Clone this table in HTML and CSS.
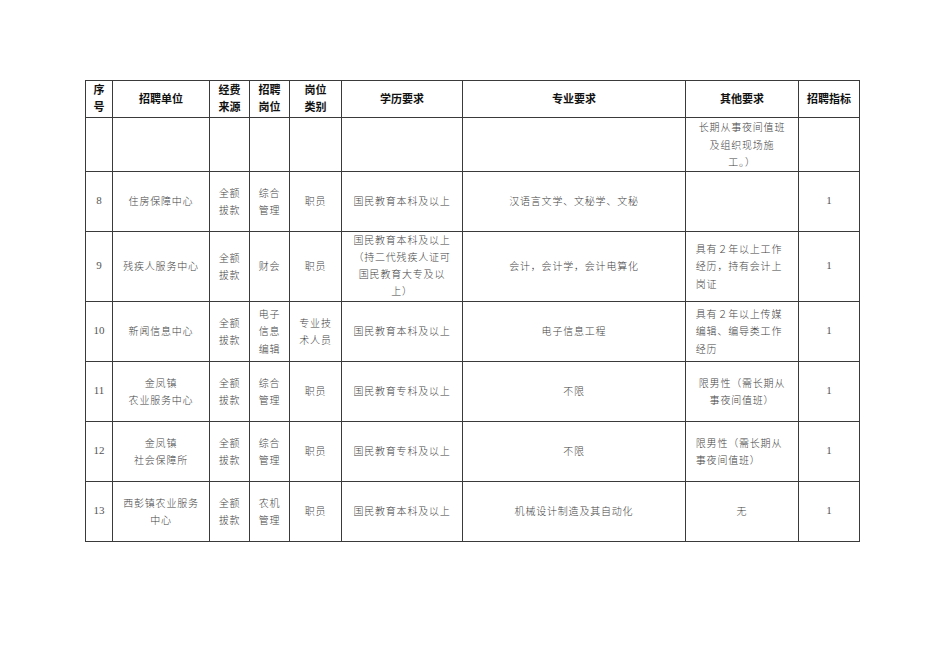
FILE: index.html
```html
<!DOCTYPE html>
<html lang="zh-CN">
<head>
<meta charset="utf-8">
<title>招聘计划表</title>
<link rel="stylesheet" href="styles.css">
</head>
<body>
<div class="page">
<table class="grid">
<colgroup>
<col class="w-no"><col class="w-unit"><col class="w-fund"><col class="w-post"><col class="w-type"><col class="w-edu"><col class="w-major"><col class="w-other"><col class="w-num">
</colgroup>
<thead>
<tr class="h-head">
<th>序<br>号</th><th>招聘单位</th><th>经费<br>来源</th><th>招聘<br>岗位</th><th>岗位<br>类别</th><th>学历要求</th><th>专业要求</th><th>其他要求</th><th>招聘指标</th>
</tr>
</thead>
<tbody>
<tr class="h-53">
<td></td><td></td><td></td><td></td><td></td><td></td><td></td><td>长期从事夜间值班<br>及组织现场施<br>工。）</td><td></td>
</tr>
<tr class="h-60">
<td class="num">8</td><td>住房保障中心</td><td>全额<br>拔款</td><td>综合<br>管理</td><td>职员</td><td>国民教育本科及以上</td><td>汉语言文学、文秘学、文秘</td><td></td><td class="num">1</td>
</tr>
<tr class="h-70">
<td class="num">9</td><td>残疾人服务中心</td><td>全额<br>拔款</td><td>财会</td><td>职员</td><td class="tight">国民教育本科及以上<br>（持二代残疾人证可<br>国民教育大专及以<br>上）</td><td>会计，会计学，会计电算化</td><td><div class="lft">具有２年以上工作<br>经历，持有会计上<br>岗证</div></td><td class="num">1</td>
</tr>
<tr class="h-60">
<td class="num">10</td><td>新闻信息中心</td><td>全额<br>拔款</td><td>电子<br>信息<br>编辑</td><td>专业技<br>术人员</td><td>国民教育本科及以上</td><td>电子信息工程</td><td><div class="lft">具有２年以上传媒<br>编辑、编导类工作<br>经历</div></td><td class="num">1</td>
</tr>
<tr class="h-61">
<td class="num">11</td><td>金凤镇<br>农业服务中心</td><td>全额<br>拔款</td><td>综合<br>管理</td><td>职员</td><td>国民教育专科及以上</td><td>不限</td><td>限男性（需长期从<br>事夜间值班）</td><td class="num">1</td>
</tr>
<tr class="h-60">
<td class="num">12</td><td>金凤镇<br>社会保障所</td><td>全额<br>拔款</td><td>综合<br>管理</td><td>职员</td><td>国民教育专科及以上</td><td>不限</td><td><div class="lft">限男性（需长期从<br>事夜间值班）</div></td><td class="num">1</td>
</tr>
<tr class="h-60">
<td class="num">13</td><td>西彭镇农业服务<br>中心</td><td>全额<br>拔款</td><td>农机<br>管理</td><td>职员</td><td>国民教育本科及以上</td><td>机械设计制造及其自动化</td><td>无</td><td class="num">1</td>
</tr>
</tbody>
</table>
</div>
</body>
</html>
```
FILE: styles.css
```css
html, body {
  margin: 0;
  padding: 0;
  background: #ffffff;
}

.page {
  padding: 80px 0 0 85px;
}

.grid {
  border-collapse: collapse;
  table-layout: fixed;
  width: 775px;
  font-family: "Liberation Serif", "Noto Sans CJK SC", serif;
}

.w-no { width: 27px; }
.w-unit { width: 97px; }
.w-fund { width: 40px; }
.w-post { width: 40px; }
.w-type { width: 52px; }
.w-edu { width: 121px; }
.w-major { width: 223px; }
.w-other { width: 113px; }
.w-num { width: 61px; }

.grid th,
.grid td {
  border: 1px solid #3a3a3a;
  padding: 0 2px;
  text-align: center;
  vertical-align: middle;
  overflow: hidden;
}

.grid th {
  font-family: "Liberation Sans", "Noto Sans CJK SC", sans-serif;
  font-weight: 700;
  font-size: 11px;
  line-height: 17px;
  color: #111;
  white-space: nowrap;
}

.grid td {
  font-family: "Noto Sans CJK SC", sans-serif;
  font-weight: 300;
  font-size: 10px;
  letter-spacing: 0.8px;
  line-height: 17.5px;
  color: #444;
  white-space: nowrap;
}

.grid td.tight {
  line-height: 16.8px;
}

.grid td.num {
  font-family: "Liberation Serif", serif;
  font-weight: 400;
  font-size: 11px;
  letter-spacing: 0;
  color: #555;
}

.lft {
  display: inline-block;
  text-align: left;
  margin-left: -6px;
}

.h-head { height: 37px; }
.h-53 { height: 53px; }
.h-60 { height: 60px; }
.h-61 { height: 60px; }
.h-70 { height: 70px; }
```
